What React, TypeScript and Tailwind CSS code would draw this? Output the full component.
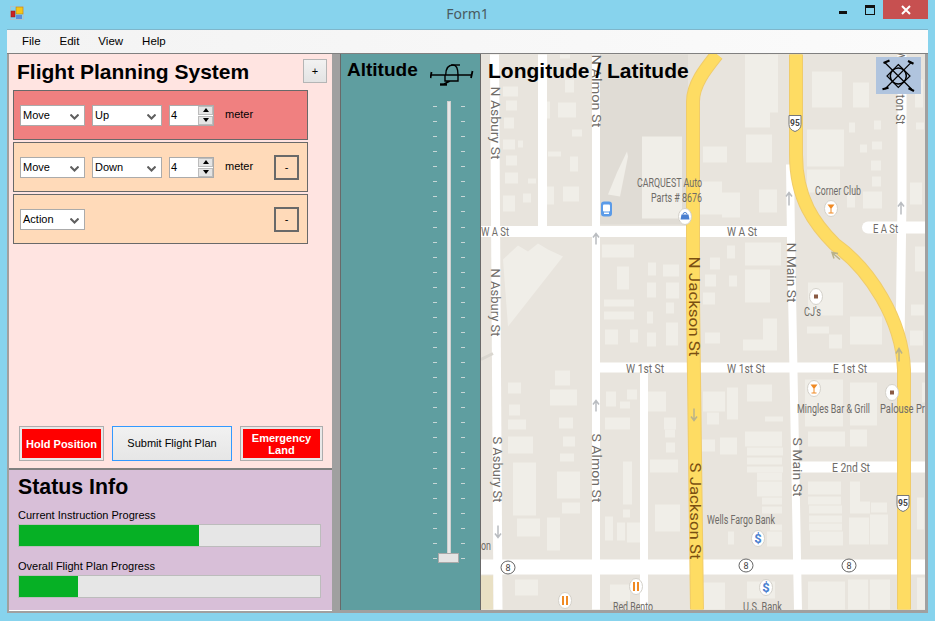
import React from "react";

const B: number[][] = [
[503,87,15,10],[506,101,11,10],[504,118,10,11],[503,140,12,10],[518,141,5,7],[506,156,11,10],[505,173,13,11],[528,179,8,5],[503,196,12,16],[523,194,8,9],
[548,152,13,5],[570,157,8,15],[563,187,16,15],[547,187,7,18],[558,103,18,15],[572,130,10,7],[565,80,9,13],[547,102,3,17],[560,55,10,4],
[745,55,25,73],[768,55,10,58],[807,130,37,37],[807,170,33,23],[812,72,30,36],[853,83,16,25],[849,123,6,10],[874,121,7,9],[860,145,7,8],[872,142,10,8],[871,161,10,10],[872,177,9,10],[863,192,19,17],[847,193,8,15],[910,183,12,22],[916,123,8,7],[915,80,8,28],[642,137,40,82],[703,147,24,16],[746,135,26,28],[700,182,22,33],[722,193,18,25],[759,190,18,23],
[602,245,32,13],[617,267,12,23],[648,263,8,13],[663,265,16,12],[604,300,30,7],[604,312,30,8],[605,330,13,15],[630,330,8,13],[647,333,9,14],[666,323,12,23],[647,283,9,15],[666,283,13,16],[666,303,8,11],[647,312,6,12],
[727,246,8,13],[745,243,36,23],[710,258,10,12],[705,275,11,12],[729,276,8,11],[703,293,12,12],[745,270,25,33],[705,333,15,11],[763,319,14,32],[743,340,20,11],
[808,283,35,33],[807,327,22,7],[829,335,13,14],[850,317,32,28],[911,305,13,11],[910,331,13,15],[915,247,10,25],
[508,383,13,11],[555,371,15,15],[550,390,27,16],[509,405,11,11],[508,420,18,10],[559,418,14,11],
[606,392,10,15],[627,390,10,10],[620,402,10,7],[648,392,18,20],[605,418,25,12],[664,418,12,12],
[703,392,22,20],[727,388,11,32],[747,385,25,17],[707,413,12,12],[765,417,18,5],
[805,380,38,47],[850,383,27,43],[922,383,4,20],
[508,437,25,17],[563,437,12,10],[560,454,14,8],[513,463,23,53],[557,472,23,27],[562,503,18,11],[517,519,23,18],[547,518,13,33],[623,462,9,43],[623,510,7,8],[605,517,8,24],[617,523,8,18],[627,523,13,20],
[650,460,28,13],[665,430,10,8],[666,443,9,10],[655,505,25,27],
[702,440,13,12],[720,438,17,17],[745,432,37,15],[747,448,36,8],[747,458,35,7],[747,467,36,6],[757,473,25,8],[757,482,25,15],[762,498,20,7],[762,507,20,7],[770,525,12,6],[767,532,15,15],[728,532,6,13],
[808,432,37,15],[850,430,17,17],
[808,482,33,13],[808,497,33,8],[809,506,33,8],[809,516,33,7],[809,524,33,7],[810,532,33,14],[850,482,10,32],[860,502,10,12],[871,503,16,10],[849,518,20,27],[870,515,10,30],[880,515,8,30],[917,498,7,32],
[515,580,23,16],[610,585,20,17],[703,583,22,27],[747,582,28,17],[808,582,37,28],[848,580,20,30],[870,580,20,30],[917,578,8,32],
];

const H: [string, number, number, number][] = [
["CARQUEST Auto",637,187,65],["Parts # 8676",651,202,51],["W A St",481,236,28],["W A St",727,236,30],["E A St",873,233,25],["Corner Club",815,195,46],["CJ's",804,316,17],
["W 1st St",626,373,38],["W 1st St",727,373,38],["E 1st St",833,373,34],["Mingles Bar & Grill",797,413,73],["Palouse Pr",880,413,45],["E 2nd St",832,472,38],["Wells Fargo Bank",707,524,68],["on",481,550,10],["Red Bento",613,611,40],["U.S. Bank",743,611,39],
];

const V: [string, number, number, number][] = [
["N Asbury St",490.5,87,73],["N Almon St",592,55,73],["N Main St",787,243,60],["N Asbury St",491,269,68],["S Asbury St",493,437,66],["S Almon St",592,434,69],["S Main St",793,438,59],["N Washington St",896,40,85],
];

function Pin({ x, y, children }: { x: number; y: number; children: React.ReactNode }) {
  return (
    <g>
      <ellipse cx={x} cy={y} rx="6.5" ry="8" fill="#fff" stroke="#d4d1ca" />
      {children}
    </g>
  );
}

function Cocktail({ x, y }: { x: number; y: number }) {
  return (
    <Pin x={x} y={y}>
      <path d={`M${x - 3.5} ${y - 4}h7l-3 4v4h2v1h-5v-1h2v-4z`} fill="#f08a24" />
    </Pin>
  );
}

function Dot({ x, y }: { x: number; y: number }) {
  return (
    <Pin x={x} y={y}>
      <rect x={x - 2} y={y - 2} width="4" height="4" fill="#8a5a44" />
    </Pin>
  );
}

function Dollar({ x, y }: { x: number; y: number }) {
  return (
    <Pin x={x} y={y}>
      <text x={x} y={y + 4.5} textAnchor="middle" fontSize="13" fontWeight="700" fill="#4a7fd0" fontFamily="Roboto, sans-serif">$</text>
    </Pin>
  );
}

function Food({ x, y }: { x: number; y: number }) {
  return (
    <Pin x={x} y={y}>
      <path d={`M${x - 2} ${y - 4.5}v9M${x + 2} ${y - 4.5}v9`} stroke="#f08a24" strokeWidth="2" />
    </Pin>
  );
}

function Route({ x, y }: { x: number; y: number }) {
  return (
    <g>
      <ellipse cx={x} cy={y} rx="7" ry="6.5" fill="#fff" stroke="#666" strokeWidth="1" />
      <text x={x} y={y + 3.5} textAnchor="middle" fontSize="9" fill="#444" fontFamily="Roboto, sans-serif">8</text>
    </g>
  );
}

function Shield({ x, y }: { x: number; y: number }) {
  return (
    <g>
      <path d={`M${x - 6} ${y - 7}h12v9q0 5-6 7q-6-2-6-7z`} fill="#fff" stroke="#777" />
      <text x={x} y={y + 3} textAnchor="middle" fontSize="8.5" fontWeight="700" fill="#444" fontFamily="Roboto, sans-serif">95</text>
    </g>
  );
}

function MapArt() {
  return (
    <svg viewBox="481 55 444 555" className="block w-full h-full">
      <rect x="481" y="55" width="444" height="555" fill="#e8e4dd" />
      <rect x="600" y="55" width="88" height="170" fill="#e0dcd5" />
      <rect x="481" y="576" width="12" height="34" fill="#e9e0c4" />
      {B.map((b, i) => (
        <rect key={i} x={b[0]} y={b[1]} width={b[2]} height={b[3]} fill="#f0eee8" />
      ))}
      <polygon points="503,260 518,246 528,252 538,244 548,250 563,257 508,327" fill="#f0eee8" />
      <polygon points="617,173 627,152 628,157 620,197 608,195" fill="#f0eee8" />
      <g stroke="#fff" fill="none">
        <path d="M494.5 55L498 610" strokeWidth="9" />
        <path d="M542.5 55V230" strokeWidth="9" />
        <path d="M596 55V610" strokeWidth="8" />
        <path d="M644 365V610" strokeWidth="8" />
        <path d="M481 232H790" strokeWidth="11" />
        <path d="M868 228H925" strokeWidth="12" strokeLinecap="round" />
        <path d="M598 368H925" strokeWidth="10" />
        <path d="M800 467.5H925" strokeWidth="11" />
        <path d="M481 567.5H925" strokeWidth="15" />
        <path d="M790 165L791 240L798 610" strokeWidth="8" />
        <path d="M902 55V200L900 345" strokeWidth="9" />
      </g>
      <g fill="none">
        <path d="M717 55C705 70 693 85 693 102V300L697 610" stroke="#f0cc6a" strokeWidth="14" />
        <path d="M796 55V155C796 200 815 225 835 245C870 270 902 320 904 370V610" stroke="#f0cc6a" strokeWidth="14" />
        <path d="M717 55C705 70 693 85 693 102V300L697 610" stroke="#fedc63" strokeWidth="12" />
        <path d="M796 55V155C796 200 815 225 835 245C870 270 902 320 904 370V610" stroke="#fedc63" strokeWidth="12" />
      </g>
      <path d="M481 360L493 354" stroke="#d9d6cf" strokeWidth="3" />
      <g fontFamily="Roboto, sans-serif" fontSize="13" fill="#6f6c68">
        {H.map(([t, x, y, w], i) => (
          <text key={i} x={x} y={y} textLength={w} lengthAdjust="spacingAndGlyphs">{t}</text>
        ))}
        {V.map(([t, x, y, w], i) => (
          <text key={i} transform={`translate(${x} ${y}) rotate(90)`} textLength={w} lengthAdjust="spacingAndGlyphs" fontSize="12.5">{t}</text>
        ))}
      </g>
      <g fontFamily="Roboto, sans-serif" fontSize="15" fill="#7a4f12">
        <text transform="translate(688.5 257) rotate(90)" textLength="100" lengthAdjust="spacingAndGlyphs">N Jackson St</text>
        <text transform="translate(690 463) rotate(90)" textLength="97" lengthAdjust="spacingAndGlyphs">S Jackson St</text>
      </g>
      <rect x="601" y="202" width="11" height="15" rx="3" fill="#5b9be8" />
      <rect x="603" y="205" width="7" height="7" rx="1" fill="#fff" />
      <rect x="604" y="213" width="5" height="1.5" fill="#fff" />
      <Pin x={685} y={217}>
        <path d="M681.5 215h7l1 5h-9z" fill="#4a7fd0" />
        <path d="M683 215a2 2 0 0 1 4 0" fill="none" stroke="#4a7fd0" />
      </Pin>
      <Cocktail x={831} y={209} />
      <Dot x={816} y={297} />
      <Cocktail x={814} y={389} />
      <Dot x={892} y={393} />
      <Dollar x={758} y={539} />
      <Dollar x={766} y={588} />
      <Food x={636} y={587} />
      <Food x={565} y={601} />
      <Route x={508} y={568} />
      <Route x={746} y={566} />
      <Route x={849} y={566} />
      <Shield x={795} y={123} />
      <Shield x={903} y={503} />
      <g stroke="#b9bcc0" strokeWidth="1.5" fill="none">
        <path d="M596 245V235M593 238L596 234L599 238" />
        <path d="M596 412V402M593 405L596 401L599 405" />
        <path d="M789 206V194M786 197L789 193L792 197" />
        <path d="M901 215V204M898 207L901 203L904 207" />
        <path d="M498 537V526M495 534L498 538L501 534" />
      </g>
      <g stroke="#b9b28a" strokeWidth="1.5" fill="none">
        <path d="M694 409V420M691 417L694 421L697 417" />
        <path d="M899 362V350M896 354L899 349L902 354" />
        <path d="M840 260L833 254M834 259L832 253L838 254" />
      </g>
    </svg>
  );
}

function Chevron() {
  return (
    <svg width="9" height="6" viewBox="0 0 9 6" className="absolute right-[5px] top-[8px]">
      <path d="M0.5 0.5L4.5 4.5L8.5 0.5" fill="none" stroke="#5f5f5f" strokeWidth="2" />
    </svg>
  );
}

function Select({ w, t }: { w: string; t: string }) {
  return (
    <div className={`relative h-[21px] ${w} bg-white border border-[#ababab] pl-[2px] leading-[19px] text-[11px] text-black`}>
      {t}
      <Chevron />
    </div>
  );
}

function Spinner() {
  return (
    <div className="h-[21px] w-[45px] ml-[7px] bg-white border border-[#ababab] flex text-[11px] leading-[19px] text-black">
      <span className="flex-1 pl-[1px]">4</span>
      <div className="w-[15px] flex flex-col gap-[1px] bg-white">
        <div className="flex-1 bg-[#e4e4e4] border border-[#bcbcbc] flex items-center justify-center">
          <div className="w-0 h-0 border-x-[3px] border-x-transparent border-b-[4px] border-b-black" />
        </div>
        <div className="flex-1 bg-[#e4e4e4] border border-[#bcbcbc] flex items-center justify-center">
          <div className="w-0 h-0 border-x-[3px] border-x-transparent border-t-[4px] border-t-black" />
        </div>
      </div>
    </div>
  );
}

function Minus() {
  return (
    <div className="absolute left-[260px] top-[12px] w-[25px] h-[25px] border-2 border-[#696969] flex items-center justify-center text-[11px] text-black">
      -
    </div>
  );
}

function Row({ bg, children, minus }: { bg: string; children: React.ReactNode; minus?: boolean }) {
  return (
    <div className={`relative h-[50px] w-[295px] ${bg} border border-[#696969] flex items-center pl-[6px]`}>
      {children}
      {minus && <Minus />}
    </div>
  );
}

function Bar({ label, pct }: { label: string; pct: string }) {
  return (
    <div className="flex flex-col">
      <div className="text-[11px] leading-[14px] text-black mb-[2px]">{label}</div>
      <div className="h-[23px] w-[303px] bg-[#e6e6e6] border border-[#bcbcbc]">
        <div className={`h-full ${pct} bg-[#06b025]`} />
      </div>
    </div>
  );
}

function RedBtn({ w, children }: { w: string; children: React.ReactNode }) {
  return (
    <div className={`${w} h-[35px] border border-[#adadad] bg-[#e8e8e8] p-[2px]`}>
      <div className="h-full bg-[#ff0000] text-white font-bold text-[11px] leading-[12px] text-center flex items-center justify-center">
        {children}
      </div>
    </div>
  );
}

function SideDrone() {
  return (
    <svg width="44" height="24" viewBox="0 0 44 24" fill="none" stroke="#000" strokeWidth="1.4">
      <path d="M1 12H42" />
      <path d="M1.5 9L0.5 15M42.5 8L41 15" strokeWidth="1.8" />
      <path d="M15.7 12C15.7 5 19 2 23 2C27 2 28 6 28 12" />
      <path d="M21 2H30" />
      <path d="M15 12V18H28V12M28 18H20L14 21" />
      <path d="M10 21.5H17" strokeWidth="2.4" />
    </svg>
  );
}

function TopDrone() {
  return (
    <svg width="45" height="37" viewBox="0 0 45 37" fill="none" stroke="#000" strokeWidth="1.2" className="block">
      <path d="M9 5.7L35.7 32.3M35 5.7L9 32" />
      <path d="M22.3 7.5L34 19L22.3 30.5L11 19Z" />
      <circle cx="22.3" cy="19" r="8" strokeWidth="1.5" />
      <path d="M7.5 6L13.5 3.5M32 4L37.5 6.7M6.5 32.3L12.5 30.7M32.5 31.3L38 34" strokeWidth="2.2" />
    </svg>
  );
}

export default function App() {
  const ticks = Array.from({ length: 31 }, (_, i) => i);
  const sans = "font-['Liberation_Sans',Arial,sans-serif]";
  return (
    <div className={`w-[935px] h-[621px] bg-[#87d3ed] overflow-hidden flex flex-col ${sans}`}>
      {/* title bar */}
      <div className="relative h-[29px] shrink-0 flex items-start">
        <svg width="14" height="14" viewBox="0 0 14 14" className="ml-[10px] mt-[6px]">
          <rect x="0.5" y="0.5" width="13" height="13" fill="none" stroke="#a9c4cf" />
          <rect x="1" y="5" width="4" height="6" fill="#c22" stroke="#822" strokeWidth="0.5" />
          <rect x="6" y="1" width="7" height="7" fill="#f5c518" stroke="#a87d10" strokeWidth="0.5" />
          <rect x="6" y="9" width="6" height="4" fill="#5b8fdc" />
        </svg>
        <div className="flex-1 text-center pt-[4px] pl-[72px] text-[14px] leading-[19px] text-[#4a5a60] font-['Noto_Sans',sans-serif]">Form1</div>
        <div className="flex items-start mr-[7px]">
          <div className="w-[8px] h-[3px] bg-[#111] mt-[11px] mr-[18px]" />
          <div className="w-[8px] h-[6px] border border-[#111] border-t-[3px] mt-[5px] mr-[8px] box-content" />
          <div className="w-[45px] h-[19px] bg-[#c75050] flex items-center justify-center text-white">
            <svg width="10" height="10" viewBox="0 0 10 10">
              <path d="M1 1L9 9M9 1L1 9" stroke="#fff" strokeWidth="2" />
            </svg>
          </div>
        </div>
      </div>

      {/* client */}
      <div className="w-[921px] ml-[7px] h-[584px] flex flex-col bg-[#a0a0a0]">
        <div className="h-[24px] shrink-0 bg-[linear-gradient(90deg,#f3f3f3,#fbfbfb)] flex items-center gap-[19px] pl-[15px] text-[11.5px] text-black border-t border-t-[#7fb6cb]">
          <span>File</span><span>Edit</span><span>View</span><span>Help</span>
        </div>
        <div className="h-[558px] shrink-0 flex border-t border-t-[#808080] pl-[2px]">
          {/* left column */}
          <div className="w-[323px] flex flex-col">
            <div className="h-[414px] bg-[#ffe4e1] flex flex-col pl-[4px]">
              <div className="h-[36px] flex items-start">
                <div className="text-[21px] leading-[25px] font-bold text-black pt-[5px] pl-[4px] w-[290px]">Flight Planning System</div>
                <div className="mt-[5px] w-[24px] h-[24px] border border-[#b5b5b5] bg-[linear-gradient(#f2f2f2,#e3e3e3)] flex items-center justify-center text-[11px] text-black">+</div>
              </div>
              <div className="flex flex-col gap-[2px]">
                <Row bg="bg-[#f08080]">
                  <Select w="w-[65px]" t="Move" />
                  <div className="w-[7px]" />
                  <Select w="w-[70px]" t="Up" />
                  <Spinner />
                  <span className="ml-[11px] text-[11px] text-black -mt-[2px]">meter</span>
                </Row>
                <Row bg="bg-[#ffdab9]" minus>
                  <Select w="w-[65px]" t="Move" />
                  <div className="w-[7px]" />
                  <Select w="w-[70px]" t="Down" />
                  <Spinner />
                  <span className="ml-[11px] text-[11px] text-black -mt-[2px]">meter</span>
                </Row>
                <Row bg="bg-[#ffdab9]" minus>
                  <Select w="w-[65px]" t="Action" />
                </Row>
              </div>
              <div className="flex-1" />
              <div className="flex gap-[8px] pl-[6px] pb-[7px]">
                <RedBtn w="w-[85px]">Hold Position</RedBtn>
                <div className="w-[120px] h-[35px] border border-[#3399ff] bg-[linear-gradient(#f1f1f1,#e6e6e6)] flex items-center justify-center text-[11px] text-black">Submit Flight Plan</div>
                <RedBtn w="w-[83px]"><span>Emergency<br />Land</span></RedBtn>
              </div>
            </div>
            <div className="h-[2px] bg-[#808080]" />
            <div className="h-[140px] bg-[#d8bfd8] pl-[9px] flex flex-col">
              <div className="text-[21.33px] leading-[25px] font-bold text-black pt-[5px] h-[38px]">Status Info</div>
              <Bar label="Current Instruction Progress" pct="w-[59.8%]" />
              <div className="h-[12px]" />
              <Bar label="Overall Flight Plan Progress" pct="w-[19.5%]" />
            </div>
            <div className="h-px bg-white" />
          </div>
          <div className="w-[8px]" />
          {/* altitude */}
          <div className="relative w-[141px] h-[556px] bg-[#5f9ea0] border-x border-x-[#696969] flex flex-col">
            <div className="h-[47px] flex items-start pl-[6px] pt-[5px]">
              <span className="text-[19px] leading-[22px] font-bold text-black w-[83px]">Altitude</span>
              <div className="-mt-[1px] h-[24px] pt-[5px]"><SideDrone /></div>
            </div>
            <div className="relative h-[459px] ml-[92px] w-[32px] flex justify-between">
              <div className="flex flex-col justify-between pt-[5px] pb-[1px]">
                {ticks.map((i) => <div key={i} className="w-[4px] h-px bg-[#c7d6d6]" />)}
              </div>
              <div className="w-[4px] bg-[#e7e7e7] border border-[#d0d0d0]" />
              <div className="flex flex-col justify-between pt-[5px] pb-[1px]">
                {ticks.map((i) => <div key={i} className="w-[4px] h-px bg-[#c7d6d6]" />)}
              </div>
              <div className="absolute left-[5px] top-[452px] w-[21px] h-[10px] bg-[#e4e4e4] border border-[#a9a9a9]" />
            </div>
          </div>
          {/* map */}
          <div className="relative w-[444px] h-[556px] bg-[#e8e4dd]">
            <MapArt />
            <div className="absolute left-[7px] top-[4px] text-[21px] leading-[25px] font-bold text-black">Longitude / Latitude</div>
            <div className="absolute left-[395px] top-[3px] w-[45px] h-[37px] bg-[#b0c4de]"><TopDrone /></div>
          </div>
        </div>
      </div>
    </div>
  );
}
